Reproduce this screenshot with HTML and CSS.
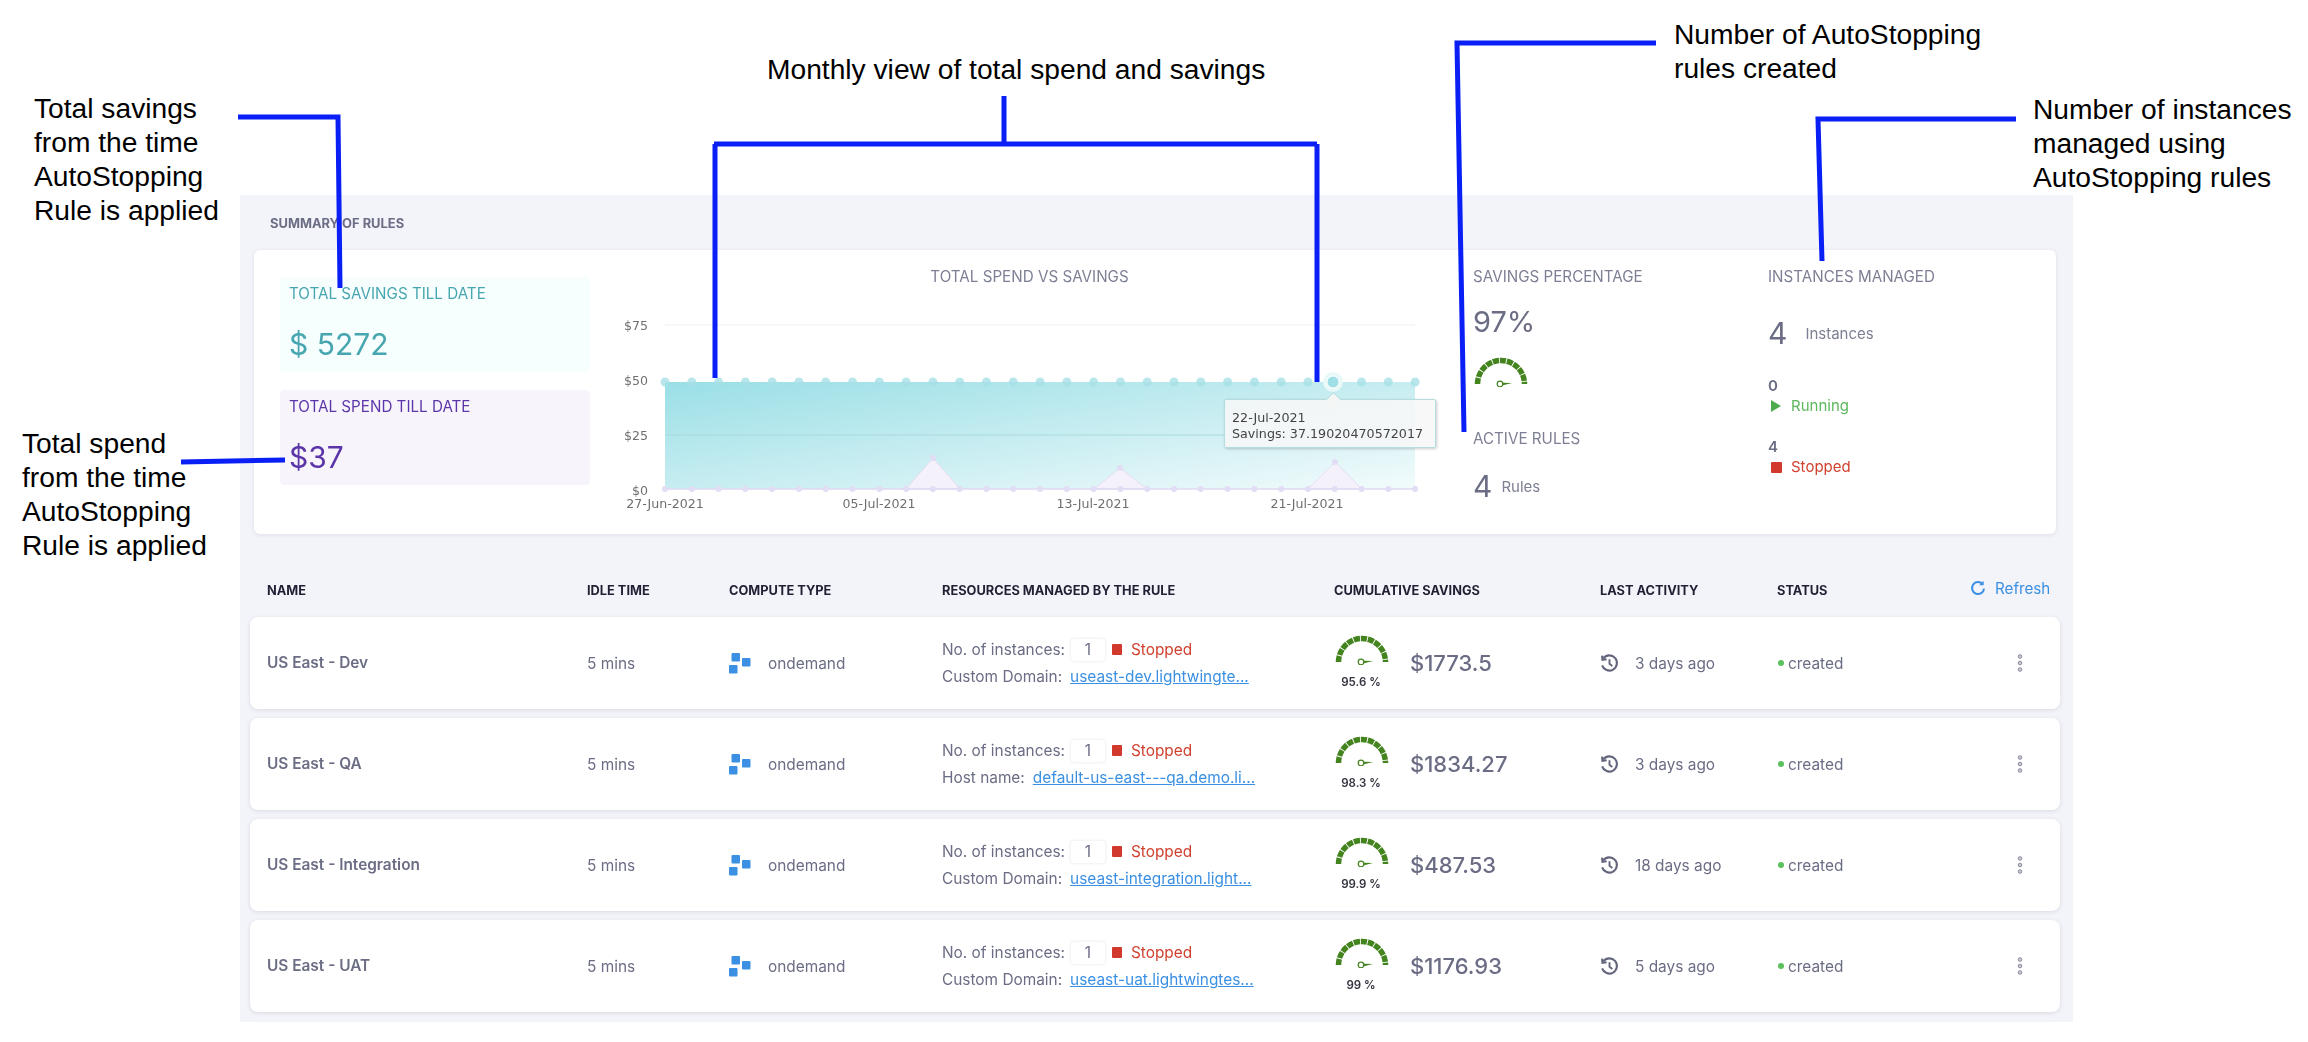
FILE: index.html
```html
<!DOCTYPE html>
<html lang="en">
<head>
    <meta charset="UTF-8">
    <title>AutoStopping rules summary</title>
    <link rel="stylesheet" href="styles.css">
</head>
<body>
    <svg class="defs" width="0" height="0">
        <symbol id="gauge" viewBox="0 0 56 30">
            <path d="M4.5 27 A23.5 23.5 0 0 1 51.5 27" fill="none" stroke="#44841f" stroke-width="5.5" stroke-dasharray="6.2 0.9"/>
            <circle cx="27" cy="27" r="2.8" fill="#fff" stroke="#44841f" stroke-width="1.2"/>
            <path d="M30 25.8 L39 26 L30 28.2 Z" fill="#44841f"/>
        </symbol>
        <symbol id="compute" viewBox="0 0 22 21">
            <rect x="2.5" y="0" width="8.5" height="8.5" rx="1" fill="#3b90e3"/>
            <rect x="13" y="5" width="8.5" height="8.5" rx="1" fill="#3b90e3"/>
            <rect x="0" y="12" width="8.5" height="8.5" rx="1" fill="#3b90e3"/>
        </symbol>
        <symbol id="history" viewBox="0 0 20 20">
            <path d="M3.4 4.6 A8 8 0 1 1 2.2 12" fill="none" stroke="#63657c" stroke-width="2.2"/>
            <path d="M2.2 1.8 L2.6 6.2 L7 5.6" fill="none" stroke="#63657c" stroke-width="2.2"/>
            <path d="M10 5.6 V10.4 L13 12.6" fill="none" stroke="#63657c" stroke-width="2"/>
        </symbol>
        <symbol id="kebab" viewBox="0 0 6 20">
            <circle cx="3" cy="3.5" r="1.8" fill="#c9cad3" stroke="#8b8d9e"/>
            <circle cx="3" cy="10" r="1.8" fill="#c9cad3" stroke="#8b8d9e"/>
            <circle cx="3" cy="16.5" r="1.8" fill="#c9cad3" stroke="#8b8d9e"/>
        </symbol>
    </svg>

    <main class="panel">
        <h2 class="panel-title">SUMMARY OF RULES</h2>

        <section class="summary-card">
            <div class="totals">
                <div class="total-box savings">
                    <div class="total-label">TOTAL SAVINGS TILL DATE</div>
                    <div class="total-value">$ 5272</div>
                </div>
                <div class="total-box spend">
                    <div class="total-label">TOTAL SPEND TILL DATE</div>
                    <div class="total-value">$37</div>
                </div>
            </div>

            <div class="chart">
                <div class="card-label chart-title">TOTAL SPEND VS SAVINGS</div>
                <div class="chart-plot">
                    <svg width="840" height="220" viewBox="0 0 840 220">
                        <defs>
                            <linearGradient id="area" x1="0" y1="0" x2="1" y2="1">
                                <stop offset="0" stop-color="#9adfe6"/>
                                <stop offset="1" stop-color="#f3fbfc"/>
                            </linearGradient>
                        </defs>
                        <line class="grid" x1="55" y1="25" x2="805" y2="25"/>
                        <rect x="55" y="82" width="750" height="107" fill="url(#area)"/>
                        <line class="grid-over" x1="55" y1="135" x2="805" y2="135"/>
                        <path class="spike" d="M296 189 L323 158 L350 189 Z"/>
                        <path class="spike" d="M484 189 L510 168 L537 189 Z"/>
                        <path class="spike" d="M698 189 L725 162 L752 189 Z"/>
                        <line class="base" x1="55" y1="189" x2="805" y2="189"/>
                        <line class="dots-teal" x1="55" y1="82" x2="806" y2="82"/>
                        <line class="dots-lilac" x1="55" y1="189" x2="806" y2="189"/>
                        <circle class="dot-lilac" cx="323" cy="158" r="3"/>
                        <circle class="dot-lilac" cx="510" cy="168" r="3"/>
                        <circle class="dot-lilac" cx="725" cy="162" r="3"/>
                        <circle class="hover-halo" cx="723" cy="82" r="10"/>
                        <circle class="hover-dot" cx="723" cy="82" r="6"/>
                        <text class="axis" x="38" y="30" text-anchor="end">$75</text>
                        <text class="axis" x="38" y="85" text-anchor="end">$50</text>
                        <text class="axis" x="38" y="140" text-anchor="end">$25</text>
                        <text class="axis" x="38" y="195" text-anchor="end">$0</text>
                        <text class="axis" x="55" y="208" text-anchor="middle">27-Jun-2021</text>
                        <text class="axis" x="269" y="208" text-anchor="middle">05-Jul-2021</text>
                        <text class="axis" x="483" y="208" text-anchor="middle">13-Jul-2021</text>
                        <text class="axis" x="697" y="208" text-anchor="middle">21-Jul-2021</text>
                    </svg>
                    <div class="chart-tip">
                        <div>22-Jul-2021</div>
                        <div>Savings: 37.19020470572017</div>
                    </div>
                </div>
            </div>

            <div class="rates">
                <div class="card-label">SAVINGS PERCENTAGE</div>
                <div class="big-number pct">97%</div>
                <svg class="gauge-big"><use href="#gauge"/></svg>
                <div class="card-label active-label">ACTIVE RULES</div>
                <div class="count-row rules-row">
                    <span class="big-number">4</span>
                    <span class="count-unit">Rules</span>
                </div>
            </div>

            <div class="instances">
                <div class="card-label">INSTANCES MANAGED</div>
                <div class="count-row instances-row">
                    <span class="big-number">4</span>
                    <span class="count-unit">Instances</span>
                </div>
                <div class="state-block">
                    <div class="state-count">0</div>
                    <div class="state running"><span class="play"></span>Running</div>
                </div>
                <div class="state-block">
                    <div class="state-count">4</div>
                    <div class="state stopped"><span class="stop"></span>Stopped</div>
                </div>
            </div>
        </section>

        <div class="table-head row-grid">
            <div>NAME</div>
            <div>IDLE TIME</div>
            <div>COMPUTE TYPE</div>
            <div>RESOURCES MANAGED BY THE RULE</div>
            <div>CUMULATIVE SAVINGS</div>
            <div>LAST ACTIVITY</div>
            <div>STATUS</div>
            <div class="refresh">
                <svg width="16" height="16" viewBox="0 0 16 16">
                    <path d="M12.6 4.2 A6 6 0 1 0 14 8.6" fill="none" stroke="#3b90e3" stroke-width="2"/>
                    <path d="M13.6 0.8 V5.2 H9.2 Z" fill="#3b90e3"/>
                </svg>
                Refresh
            </div>
        </div>

        <div class="rule row-grid">
            <div class="rule-name">US East - Dev</div>
            <div>5 mins</div>
            <div class="compute"><svg class="ico-compute"><use href="#compute"/></svg>ondemand</div>
            <div class="resources">
                <div class="res-line">No. of instances:<span class="inst-box">1</span><span class="stop"></span><span class="stopped">Stopped</span></div>
                <div class="res-line">Custom Domain:<a class="res-link">useast-dev.lightwingte...</a></div>
            </div>
            <div class="cumulative">
                <div class="gauge-wrap"><svg class="gauge-small"><use href="#gauge"/></svg><div class="gauge-pct">95.6 %</div></div>
                <div class="amount">$1773.5</div>
            </div>
            <div class="activity"><svg class="ico-history"><use href="#history"/></svg>3 days ago</div>
            <div class="status"><span class="status-dot"></span>created</div>
            <svg class="ico-kebab"><use href="#kebab"/></svg>
        </div>

        <div class="rule row-grid">
            <div class="rule-name">US East - QA</div>
            <div>5 mins</div>
            <div class="compute"><svg class="ico-compute"><use href="#compute"/></svg>ondemand</div>
            <div class="resources">
                <div class="res-line">No. of instances:<span class="inst-box">1</span><span class="stop"></span><span class="stopped">Stopped</span></div>
                <div class="res-line">Host name:<a class="res-link">default-us-east---qa.demo.li...</a></div>
            </div>
            <div class="cumulative">
                <div class="gauge-wrap"><svg class="gauge-small"><use href="#gauge"/></svg><div class="gauge-pct">98.3 %</div></div>
                <div class="amount">$1834.27</div>
            </div>
            <div class="activity"><svg class="ico-history"><use href="#history"/></svg>3 days ago</div>
            <div class="status"><span class="status-dot"></span>created</div>
            <svg class="ico-kebab"><use href="#kebab"/></svg>
        </div>

        <div class="rule row-grid">
            <div class="rule-name">US East - Integration</div>
            <div>5 mins</div>
            <div class="compute"><svg class="ico-compute"><use href="#compute"/></svg>ondemand</div>
            <div class="resources">
                <div class="res-line">No. of instances:<span class="inst-box">1</span><span class="stop"></span><span class="stopped">Stopped</span></div>
                <div class="res-line">Custom Domain:<a class="res-link">useast-integration.light...</a></div>
            </div>
            <div class="cumulative">
                <div class="gauge-wrap"><svg class="gauge-small"><use href="#gauge"/></svg><div class="gauge-pct">99.9 %</div></div>
                <div class="amount">$487.53</div>
            </div>
            <div class="activity"><svg class="ico-history"><use href="#history"/></svg>18 days ago</div>
            <div class="status"><span class="status-dot"></span>created</div>
            <svg class="ico-kebab"><use href="#kebab"/></svg>
        </div>

        <div class="rule row-grid">
            <div class="rule-name">US East - UAT</div>
            <div>5 mins</div>
            <div class="compute"><svg class="ico-compute"><use href="#compute"/></svg>ondemand</div>
            <div class="resources">
                <div class="res-line">No. of instances:<span class="inst-box">1</span><span class="stop"></span><span class="stopped">Stopped</span></div>
                <div class="res-line">Custom Domain:<a class="res-link">useast-uat.lightwingtes...</a></div>
            </div>
            <div class="cumulative">
                <div class="gauge-wrap"><svg class="gauge-small"><use href="#gauge"/></svg><div class="gauge-pct">99 %</div></div>
                <div class="amount">$1176.93</div>
            </div>
            <div class="activity"><svg class="ico-history"><use href="#history"/></svg>5 days ago</div>
            <div class="status"><span class="status-dot"></span>created</div>
            <svg class="ico-kebab"><use href="#kebab"/></svg>
        </div>
    </main>

    <!-- callouts drawn on top of the screenshot -->
    <svg class="callout-lines" width="2308" height="1042" viewBox="0 0 2308 1042">
        <path d="M238 117 H338 L340 288"/>
        <path d="M181 462 L285 460"/>
        <path d="M1004 96 V144 M714 144 H1317 M715 144 V378 M1317 144 V382"/>
        <path d="M1656 43 H1457 L1464 432"/>
        <path d="M2016 119 H1818 L1822 261"/>
    </svg>
    <div class="callout c-savings">Total savings<br>from the time<br>AutoStopping<br>Rule is applied</div>
    <div class="callout c-spend">Total spend<br>from the time<br>AutoStopping<br>Rule is applied</div>
    <div class="callout c-monthly">Monthly view of total spend and savings</div>
    <div class="callout c-rules">Number of AutoStopping<br>rules created</div>
    <div class="callout c-instances">Number of instances<br>managed using<br>AutoStopping rules</div>
</body>
</html>
```

FILE: styles.css
```css
body {
    margin: 0;
    width: 2308px;
    height: 1042px;
    overflow: hidden;
    position: relative;
    background-color: #fff;
    font-family: Inter, "Noto Sans", sans-serif;
    color: #6b6d85;
}

.defs {
    position: absolute;
}

.panel {
    box-sizing: border-box;
    width: 1833px;
    height: 827px;
    margin: 195px 0 0 240px;
    padding: 0 13px 0 10px;
    background-color: #f3f3fa;
    filter: blur(0.6px);
}

.panel-title {
    margin: 0;
    padding: 21px 0 0 20px;
    height: 34px;
    font-size: 12.9px;
    line-height: 16px;
    font-weight: 700;
    color: #6b6d85;
}

/* summary card */
.summary-card {
    box-sizing: border-box;
    display: flex;
    height: 284px;
    margin: 0 4px;
    padding: 17px 0 0 26px;
    background-color: #fff;
    border-radius: 6px;
    box-shadow: 0 1px 4px rgba(40, 41, 61, 0.1);
}

.totals {
    width: 310px;
    flex: none;
    margin-top: 10px;
}

.total-box {
    box-sizing: border-box;
    height: 95px;
    margin-bottom: 18px;
    padding: 7px 9px;
    border-radius: 4px;
}

.total-box.savings {
    background-color: #f6fefe;
    color: #47a6b0;
}

.total-box.spend {
    background-color: #f7f4fc;
    color: #5c36a8;
}

.total-label {
    font-size: 15.2px;
    line-height: 20px;
}

.total-value {
    margin-top: 20px;
    font-size: 30px;
    line-height: 40px;
}

.card-label {
    font-size: 15.2px;
    line-height: 20px;
    color: #7d7f94;
}

.chart {
    width: 840px;
    flex: none;
    margin-left: 20px;
}

.chart-title {
    text-align: center;
    margin-left: -1px;
}

.chart-plot {
    position: relative;
    margin-top: 13px;
}

.chart-plot svg {
    display: block;
}

.grid {
    stroke: #f0f0f3;
    stroke-width: 1;
}

.grid-over {
    stroke: #a9d9de;
    stroke-width: 1;
}

.base {
    stroke: #ded9f3;
    stroke-width: 1.5;
}

.spike {
    fill: #f5f1fa;
    stroke: #e4def3;
    stroke-width: 1;
}

.dots-teal {
    stroke: #a7e1e7;
    stroke-width: 9;
    stroke-linecap: round;
    stroke-dasharray: 0 26.79;
    opacity: 0.8;
}

.dots-lilac {
    stroke: #e2dcf4;
    stroke-width: 6;
    stroke-linecap: round;
    stroke-dasharray: 0 26.79;
}

.dot-lilac {
    fill: #e2dcf4;
}

.hover-halo {
    fill: #e9f8f9;
}

.hover-dot {
    fill: #a0dfe6;
    stroke: #fff;
    stroke-width: 1;
}

.axis {
    font-family: "DejaVu Sans", sans-serif;
    font-size: 12.6px;
    fill: #6f6f6f;
}

.chart-tip {
    position: absolute;
    left: 614px;
    top: 99px;
    box-sizing: border-box;
    width: 212px;
    height: 49px;
    padding: 10px 7px;
    font-family: "DejaVu Sans", sans-serif;
    font-size: 12.7px;
    line-height: 16px;
    color: #444;
    background-color: rgba(247, 247, 247, 0.88);
    border: 1px solid #b5dcdf;
    border-radius: 2px;
    box-shadow: 1px 1px 3px rgba(0, 0, 0, 0.2);
    white-space: nowrap;
}

.chart-tip::before {
    content: "";
    position: absolute;
    left: 103px;
    top: -6px;
    width: 10px;
    height: 10px;
    background-color: #f4f6f6;
    border-left: 1px solid #b5dcdf;
    border-top: 1px solid #b5dcdf;
    transform: rotate(45deg);
}

.rates {
    width: 295px;
    flex: none;
    margin-left: 23px;
}

.big-number {
    font-size: 30px;
    line-height: 38px;
    color: #6b6d85;
}

.pct {
    margin-top: 16px;
    font-size: 29px;
}

.gauge-big {
    display: block;
    width: 56px;
    height: 30px;
    margin-top: 16px;
}

.active-label {
    margin-top: 42px;
}

.count-row {
    display: flex;
    align-items: center;
}

.count-unit {
    font-size: 15px;
    color: #7d7f94;
}

.rules-row {
    gap: 9px;
    margin-top: 18px;
}

.instances {
    flex: 1;
}

.instances-row {
    gap: 18px;
    margin-top: 27px;
}

.state-block {
    margin-top: 24px;
    font-size: 15px;
    line-height: 20px;
}

.state-block + .state-block {
    margin-top: 21px;
}

.state-count {
    font-weight: 600;
    color: #6b6d85;
}

.state {
    display: flex;
    align-items: center;
}

.running {
    color: #5cb85c;
}

.stopped {
    color: #d0412f;
}

.play {
    width: 0;
    height: 0;
    margin: 0 10px 0 3px;
    border-left: 10px solid #4dab4d;
    border-top: 6px solid transparent;
    border-bottom: 6px solid transparent;
}

.stop {
    display: inline-block;
    width: 11px;
    height: 11px;
    margin-left: 3px;
    margin-right: 9px;
    background-color: #d0392b;
    border-radius: 1px;
}

/* rules table */
.row-grid {
    display: grid;
    grid-template-columns: 320px 142px 213px 392px 266px 177px 240px 1fr;
    align-items: center;
    padding-left: 17px;
}

.table-head {
    height: 83px;
    padding-top: 30px;
    box-sizing: border-box;
    font-size: 12.8px;
    font-weight: 700;
    color: #1f2033;
    grid-template-columns: 320px 142px 213px 392px 266px 177px 193px 1fr;
}

.refresh {
    display: flex;
    align-items: center;
    gap: 9px;
    margin-top: -5px;
    font-size: 15.2px;
    font-weight: 400;
    color: #3b90e3;
}

.rule {
    box-sizing: border-box;
    height: 92px;
    margin-bottom: 9px;
    background-color: #fff;
    border-radius: 8px;
    box-shadow: 0 1px 4px rgba(40, 41, 61, 0.12);
    font-size: 15.4px;
}

.rule-name {
    font-weight: 600;
    margin-top: -2px;
}

.compute {
    display: flex;
    align-items: center;
    gap: 17px;
}

.ico-compute {
    width: 22px;
    height: 21px;
}

.res-line {
    display: flex;
    align-items: center;
    height: 21px;
    white-space: nowrap;
}

.res-line + .res-line {
    margin-top: 6px;
}

.inst-box {
    box-sizing: border-box;
    width: 34px;
    height: 22px;
    margin: 0 4px 0 6px;
    line-height: 22px;
    text-align: center;
    background-color: #fff;
    box-shadow: 0 0 3px rgba(40, 41, 61, 0.14);
    border-radius: 3px;
}

.res-line .stop {
    width: 10px;
    height: 11px;
}

.res-link {
    margin-left: 8px;
    color: #3b90e3;
    text-decoration: underline;
}

.cumulative {
    display: flex;
    align-items: center;
    gap: 22px;
}

.gauge-wrap {
    width: 54px;
    text-align: center;
    margin-top: -2px;
}

.gauge-small {
    display: block;
    width: 56px;
    height: 30px;
}

.gauge-pct {
    margin-top: 10px;
    font-size: 11.5px;
    line-height: 14px;
    font-weight: 600;
    color: #33343f;
}

.amount {
    font-size: 22px;
    font-weight: 500;
}

.activity {
    display: flex;
    align-items: center;
    gap: 16px;
}

.ico-history {
    width: 19px;
    height: 19px;
}

.status {
    display: flex;
    align-items: center;
    gap: 4px;
}

.status-dot {
    width: 6px;
    height: 6px;
    margin-left: 1px;
    border-radius: 50%;
    background-color: #5cc05c;
}

.ico-kebab {
    width: 6px;
    height: 20px;
}

/* callouts */
.callout-lines {
    position: absolute;
    left: 0;
    top: 0;
}

.callout-lines path {
    fill: none;
    stroke: #0a1ff5;
    stroke-width: 5;
}

.callout {
    position: absolute;
    font-family: "Liberation Sans", Arial, sans-serif;
    font-size: 28.2px;
    line-height: 34px;
    color: #000;
    white-space: nowrap;
}

.c-savings {
    left: 34px;
    top: 91px;
}

.c-spend {
    left: 22px;
    top: 426px;
}

.c-monthly {
    left: 767px;
    top: 52px;
}

.c-rules {
    left: 1674px;
    top: 17px;
}

.c-instances {
    left: 2033px;
    top: 92px;
}
```
